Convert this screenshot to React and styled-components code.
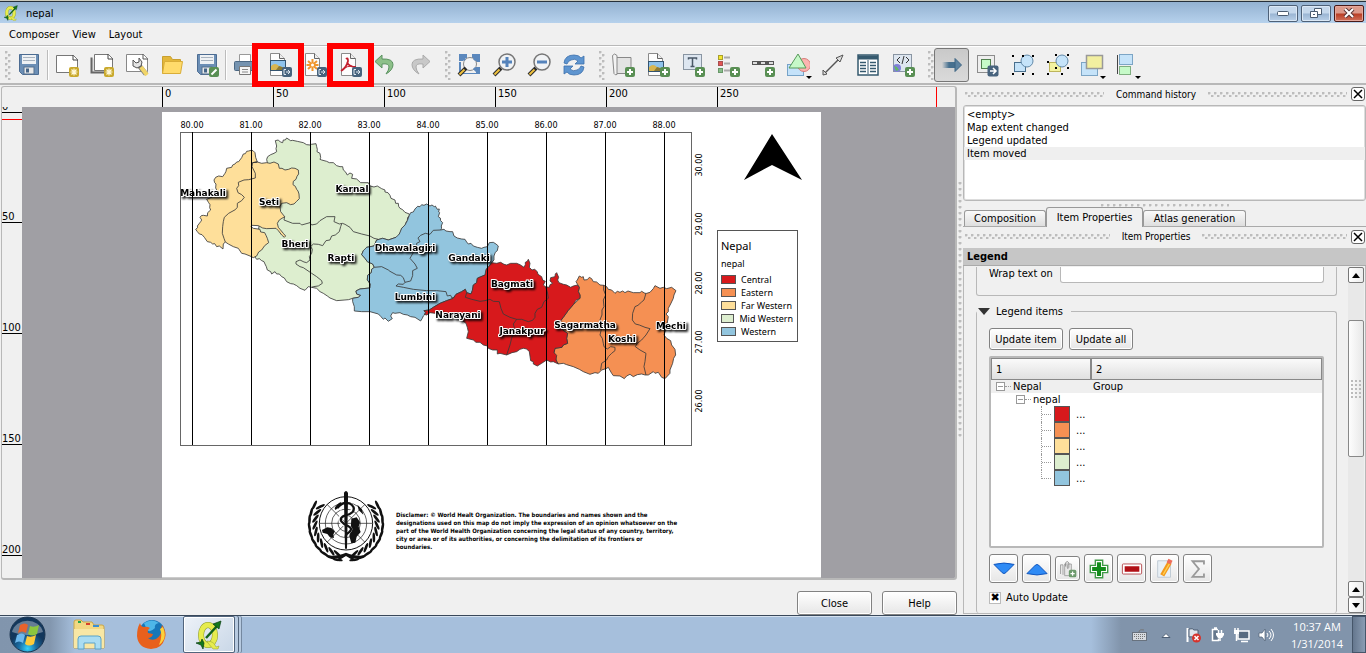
import React from "react";
import styled, { createGlobalStyle, css } from "styled-components";

const ui = `"DejaVu Sans Condensed", "Noto Sans", "DejaVu Sans", sans-serif`;
const C = {
  bg: "#f0f0f0", line: "#b8b8b8", edge: "#828282",
  red: "#d7191c", orange: "#f59053", yellow: "#fedf9a", green: "#ddeecf", blue: "#92c5de",
};

const Global = createGlobalStyle`
  *{box-sizing:border-box}
  body{margin:0;background:${C.bg};font:11px/13px ${ui};color:#000}
  button,input{font:inherit;color:inherit;margin:0}
  button{padding:0}
  svg{display:block;flex:none}
`;

/* ---------- window frame ---------- */
const Window = styled.div`display:flex;flex-direction:column;min-height:100vh;overflow:hidden;`;
const TitleBar = styled.header`
  display:flex;align-items:center;height:23px;padding:2px 2px 0 3px;gap:3px;
  border-top:1px solid #c9c9bd;box-shadow:inset 0 1px #26303a;
  background:linear-gradient(#92b0d0,#b6d1ec);
  h1{flex:1;font:inherit;font-size:11px;margin:0 0 0 4px;}
`;
const CaptionButton = styled.button`
  width:30px;height:17px;border-radius:2px;display:flex;align-items:center;justify-content:center;
  border:1px solid #4e6178;box-shadow:inset 0 0 0 1px #dbe8f5;
  background:linear-gradient(#c5d8ec 48%,#9ab5d3 52%,#b9d0e8);
  ${(p) => p.$close && css`border-color:#471a18;box-shadow:inset 0 0 0 1px #e5a79b;background:linear-gradient(#dc9a8b 48%,#b83c22 52%,#d0705a);`}
`;
const MenuBar = styled.nav`
  display:flex;gap:13px;height:23px;padding:1px 9px 0;align-items:center;border-bottom:1px solid ${C.line};
  button{border:0;background:none;}
`;

/* ---------- toolbar ---------- */
const Toolbar = styled.div`
  display:flex;align-items:center;height:39px;padding-left:5px;border-bottom:2px solid ${C.line};
  border-top:1px solid #fff;
`;
const dots = css`
  background-image:radial-gradient(circle at 1px 1px,#bdbdbd 1px,transparent 2px),radial-gradient(circle at 1px 1px,#bdbdbd 1px,transparent 2px);
  background-size:6px 6px;background-position:0 0,3px 3px;
`;
const Grip = styled.i`width:6px;height:29px;margin-left:${(p) => (p.$first ? 0 : 8)}px;${dots}`;
const Divider = styled.i`width:2px;height:30px;margin-left:1px;background:#bcbcbc;border-right:1px solid #fff;`;
const Tool = styled.button`
  position:relative;width:35px;height:34px;border:1px solid transparent;background:none;border-radius:3px;
  display:flex;align-items:center;justify-content:center;flex:none;
  ${(p) => p.$on && css`border-color:#777;background:linear-gradient(#c9c9c9,#dadada);`}
`;
const Highlight = styled.span`
  position:absolute;z-index:2;top:-6px;bottom:-6px;border:6px solid #f00;
  left:${(p) => (p.$wide ? -11 : -6)}px;right:-8px;
`;
const Drop = styled.i`
  position:absolute;right:2px;bottom:2px;border:3px solid transparent;border-top-color:#000;border-bottom:0;
`;

const Badge = ({ kind }) => (
  <g transform="translate(14 14)">
    <rect width="10" height="10" rx="2" fill={{ add: "#598f54", star: "#c9a92c", out: "#47637d", edit: "#598f54" }[kind]} />
    {kind === "add" && <path d="M5 2v6M2 5h6" stroke="#fff" strokeWidth="2" />}
    {kind === "star" && <path d="M5 1.500v7M1.500 5h7M2.500 2.500l5 5M7.500 2.500l-5 5" stroke="#fff8d8" strokeWidth="1.200" />}
    {kind === "out" && <path d="M4 2.500H2v5h2M4 5h4M6 3l2 2-2 2" stroke="#dfe8f0" fill="none" />}
    {kind === "edit" && <path d="M2.500 7.500l5-5" stroke="#fff" strokeWidth="2" />}
  </g>
);
const Sheet = ({ x = 5, w = 14 }) => (
  <g><path d={`M${x} .500h${w - 5}l5 5V22.500H${x}z`} fill="#fdfdfd" stroke="#8a8a8a" />
    <path d={`M${x + w - 5} .500v5h5`} fill="#eee" stroke="#666" /></g>
);
const Photo = ({ y = 8 }) => (
  <g transform={`translate(2 ${y})`}><rect x=".500" y=".500" width="15" height="10" fill="#8fc3ec" stroke="#33536f" />
    <path d="M1 6q4-4 8 0l6 2v2H1z" fill="#d8b54f" /><path d="M9 6l6 2v2h-9z" fill="#8b7a35" /></g>
);
const Floppy = () => (
  <g><path d="M2.500 1.500h19v20h-16l-3-3z" fill="#6b8eb5" stroke="#4c6c92" />
    <rect x="5" y="2" width="14" height="9" fill="#eef1f4" /><path d="M6 4.500h12M6 7.500h12" stroke="#a8b3bf" />
    <rect x="7" y="14" width="10" height="7" fill="#e8e8e8" stroke="#54708f" /><rect x="9" y="15.500" width="3" height="4" fill="#456588" /></g>
);
const Lens = ({ sign }) => (
  <g><path d="M2 22l7-7" stroke="#2b2b2b" strokeWidth="4" /><path d="M2.500 21.500l5-5" stroke="#f0c23e" strokeWidth="2" />
    <circle cx="15" cy="9" r="8" fill="#f1f3f5" stroke="#767676" strokeWidth="1.500" />
    <path d={sign === "+" ? "M15 4v10M10 9h10" : "M10 9h10"} stroke="#5583bb" strokeWidth="3" /></g>
);
const Undo = ({ c, d }) => <path d="M9 2L2 8.500l7 6.500v-4q7-1 7 3 0 3-3 7 7-4 7-9.500 0-6-11-5.500z" fill={c} stroke={d} />;

const icons = {
  save: <Floppy />,
  fresh: <><path d="M1.500 2.500h17l4 4v13h-21z" fill="#fff" stroke="#777" /><path d="M18 2v5h5" fill="none" stroke="#444" /><Badge kind="star" /></>,
  copy: <><path d="M1.500 4.500v15h18v-2" fill="#ddd" stroke="#666" strokeWidth="2" /><path d="M4.500 1.500h14l4 4v12h-18z" fill="#fff" stroke="#777" /><path d="M18 1v5h5" fill="none" stroke="#444" /><Badge kind="star" /></>,
  wrench: <><path d="M1.500 1.500h17l4 4v13h-21z" fill="#fff" stroke="#888" /><path d="M18 1v5h5" fill="none" stroke="#555" /><path d="M12 10l9 11" stroke="#777" strokeWidth="5" /><path d="M16 14l6 8" stroke="#f1d568" strokeWidth="4" /><path d="M8 7l3 3 3-1 0-4 3 4-1 4-4 2-4-2z" fill="#e4e4e4" stroke="#555" /></>,
  folder: <><path d="M2.500 20.500v-17h8l2 3h8v4" fill="#e3b73a" stroke="#c9a030" /><path d="M2.500 20.500l2-12h18l-2 12z" fill="#ffdb6b" stroke="#d9ad38" /></>,
  saveAs: <><Floppy /><Badge kind="edit" /></>,
  print: <><path d="M6.500 1.500h11v7h-11z" fill="#fff" stroke="#999" /><rect x="1.500" y="8.500" width="21" height="9" rx="1" fill="#7593b0" stroke="#4c6884" /><path d="M6.500 13.500h11v8h-11z" fill="#f5f5f5" stroke="#777" /><path d="M9 16.500h6M9 19h6" stroke="#888" /></>,
  image: <><Sheet x={2.5} w={14} /><Photo y={7} /><Badge kind="out" /></>,
  svg: <><Sheet x={2.5} /><path d="M9.500 6v12M3.500 12h12M5 8l9 8M14 8l-9 8" stroke="#f0962e" strokeWidth="2" /><circle cx="9.500" cy="12" r="1.500" fill="#fff" /><Badge kind="out" /></>,
  pdf: <><Sheet x={3.5} /><path d="M8 6q2-2 2 2-1 6-7 10M9 9q2 5 9 5" fill="none" stroke="#c3202f" strokeWidth="1.800" /><path d="M5 16q4-3 9-3" fill="none" stroke="#c3202f" /><Badge kind="out" /></>,
  undo: <Undo c="#8dc089" d="#5b9260" />,
  redo: <g transform="matrix(-1 0 0 1 24 0)"><Undo c="#c8c8c8" d="#aaa" /></g>,
  full: <><rect x="2" y="1" width="21" height="20" fill="#5b88bd" /><path d="M10 1h5v4h3l1 4h4v5h-4v6H4V9H2V8h4l1-3h3z" fill="#f0f0f0" /><circle cx="13" cy="11" r="6.500" fill="#f4f5f6" stroke="#888" /><path d="M5 4l3 3M20 4l-3 3M20 18l-3-3" stroke="#5b88bd" strokeWidth="3" /><path d="M2 22l7-7" stroke="#2b2b2b" strokeWidth="4" /><path d="M2.500 21.500l5-5" stroke="#f0c23e" strokeWidth="2" /></>,
  zin: <Lens sign="+" />, zout: <Lens sign="-" />,
  refresh: <g fill="#5e95d0" stroke="#3d70ab" strokeWidth=".800"><path d="M2 10q1-8 10-8 5 0 7 3l3-2v8h-9l3-3q-3-3-7-1-3 1-4 4z" /><path d="M22 14q-1 8-10 8-5 0-7-3l-3 2v-8h9l-3 3q3 3 7 1 3-1 4-4z" /></g>,
  map: <><path d="M4 4.500h16v16H5" fill="#e3e3e3" stroke="#888" /><path d="M1.500 2.500q2-3 4.500 0v19q-2 1-3-1z" fill="#f3f3f3" stroke="#888" /><Badge kind="add" /></>,
  picture: <><Sheet x={2.5} /><Photo y={8} /><Badge kind="add" /></>,
  text: <><rect x="2.500" y="1.500" width="18" height="15" fill="#dde6f0" stroke="#8995a2" /><path d="M7.500 6.500V5h8v1.500M11.500 5v8M9.500 13.500h4" stroke="#4a5867" fill="none" strokeWidth="1.500" /><Badge kind="add" /></>,
  legend: <><rect x="2.500" y="2.500" width="4" height="4" fill="#f3e72c" stroke="#a89e2c" /><rect x="2.500" y="8.500" width="4" height="4" fill="#e35454" stroke="#a85050" /><rect x="2.500" y="15.500" width="4" height="4" fill="#89bc8b" stroke="#689868" /><path d="M8 4.500h6M8 10.500h6M8 17.500h6" stroke="#aaa" strokeWidth="2" /><Badge kind="add" /></>,
  scale: <><rect x="1.500" y="8.500" width="21" height="3" fill="#ddd" stroke="#555" /><path d="M6 10h4M14 10h4" stroke="#555" strokeWidth="2" /><Badge kind="add" /></>,
  shape: <><rect x="1.500" y="11.500" width="16" height="11" fill="#c4e2fa" stroke="#76a3c8" /><circle cx="18" cy="12" r="6.500" fill="#fbb4b0" stroke="#d77c79" /><path d="M12 1l8 14H3z" fill="#c6f8c8" stroke="#579a59" /></>,
  arrow: <><path d="M3 21L18 6" stroke="#555" strokeWidth="1.500" /><path d="M22 2l-3 7-4-4zM2 22v-5l4 4z" fill="#ddd" stroke="#555" /></>,
  table: <><rect x="2" y="2" width="20" height="20" fill="#fff" stroke="#35596e" strokeWidth="1.500" /><path d="M2 4.500h20" stroke="#35596e" strokeWidth="4" /><path d="M12 7v14" stroke="#35596e" /><path d="M4 9.500h6M4 12.500h6M4 15.500h6M4 18.500h6M14 9.500h6M14 12.500h6M14 15.500h6M14 18.500h6" stroke="#35596e" strokeWidth="1.500" /></>,
  html: <><rect x="2.500" y="1.500" width="18" height="17" fill="#dde6f0" stroke="#8995a2" /><path d="M9 4L6 7l3 3M15 4l3 3-3 3M13 3l-2 8" stroke="#333" fill="none" /><circle cx="6" cy="15" r="4" fill="#8080d8" /><path d="M3 13l3 1 2 3-3 1z" fill="#61b865" /><Badge kind="add" /></>,
  move: <><defs><linearGradient id="mv"><stop offset="0" stopColor="#47708f" stopOpacity="0" /><stop offset=".500" stopColor="#47708f" /></linearGradient></defs><path d="M2 9h14v6H2z" fill="url(#mv)" /><path d="M15 5.500l6.500 6.500-6.500 6.500z" fill="#5d83a1" stroke="#3d6482" /></>,
  inside: <><rect x="2.500" y="2.500" width="17" height="17" fill="#eee" stroke="#8c8c8c" /><rect x="6.500" y="6.500" width="9" height="9" fill="#c6fac8" stroke="#51804f" /><rect x="12.500" y="12.500" width="11" height="11" rx="2" fill="#47637d" /><path d="M15 18h6M18 15l3 3-3 3" stroke="#fff" strokeWidth="1.500" fill="none" /></>,
  group: <><rect x="4.500" y="9.500" width="11" height="9" fill="#c5e3f9" stroke="#496f8d" /><circle cx="17" cy="8" r="6" fill="#c5e3f9" stroke="#6289a8" /><path fill="#000" d="M2 2h2v2H2zM12 2h2v2h-2zM22 2h2v2h-2zM2 20h2v2H2zM22 20h2v2h-2zM12 20h2v2h-2z" /></>,
  ungroup: <><rect x="4.500" y="9.500" width="11" height="9" fill="#f4f3a0" stroke="#bdb55c" /><circle cx="17" cy="8" r="6" fill="#c5e3f9" stroke="#6289a8" /><path fill="#000" d="M2 8h2v2H2zM10 1h2v2h-2zM22 1h2v2h-2zM2 20h2v2H2zM22 14h2v2h-2zM16 20h2v2h-2zM10 14h2v2h-2z" /></>,
  raise: <><rect x="1.500" y="9.500" width="16" height="13" fill="#c5e3f9" stroke="#7ca5c5" /><rect x="6.500" y="2.500" width="16" height="13" fill="#f2efa0" stroke="#999" strokeWidth="1.500" /></>,
  align: <><path d="M2.500 2v19" stroke="#444" /><rect x="4.500" y="1.500" width="13" height="10" fill="#c5e3f9" stroke="#7ca5c5" /><rect x="4.500" y="13.500" width="11" height="8" fill="#c6fac8" stroke="#7fae80" /></>,
};
const Icon = ({ name, size = 24 }) => <svg width={size} height={size} viewBox="0 0 24 24" fill="none" aria-hidden="true">{icons[name]}</svg>;

const toolGroups = [
  ["grip1", ["save", "Save project"]],
  ["sep", ["fresh", "New composer"], ["copy", "Duplicate composer"], ["wrench", "Composer manager"], ["folder", "Load template"], ["saveAs", "Save as template"]],
  ["sep", ["print", "Print"], ["image", "Export as image", "wide"], ["svg", "Export as SVG"], ["pdf", "Export as PDF", "narrow"], ["undo", "Undo"], ["redo", "Redo"]],
  ["grip", ["full", "Zoom full"], ["zin", "Zoom in"], ["zout", "Zoom out"], ["refresh", "Refresh view"]],
  ["grip", ["map", "Add map"], ["picture", "Add image"], ["text", "Add label"], ["legend", "Add legend"], ["scale", "Add scalebar"], ["shape", "Add shape", "drop"], ["arrow", "Add arrow"], ["table", "Add table"], ["html", "Add HTML frame"]],
  ["grip", ["move", "Select item", "on"], ["inside", "Move item content"], ["group", "Group items"], ["ungroup", "Ungroup items"], ["raise", "Raise items", "drop"], ["align", "Align items", "drop"]],
];

/* ---------- composer view ---------- */
const Main = styled.main`display:flex;flex:1;min-height:0;`;
const Work = styled.section`flex:1;min-width:0;display:flex;flex-direction:column;padding:1px 0 0 1px;`;
const View = styled.div`
  flex:1;min-height:0;display:grid;grid-template:20px 1fr / 20px 1fr;
  border:2px solid ${C.line};border-left-width:1px;border-top-width:1px;border-radius:3px;overflow:hidden;
`;
const RulerX = styled.div`
  grid-column:2;display:flex;padding-left:140px;overflow:hidden;font-size:11px;
  span{width:111px;flex:none;border-left:1px solid #000;padding-left:2px;line-height:13px;}
`;
const CursorX = styled.i`flex:none;width:1px;background:#f00;margin-left:108px;`;
const RulerY = styled.div`
  display:flex;flex-direction:column;overflow:hidden;font-size:11px;
  span{height:111px;flex:none;border-bottom:1px solid #000;display:flex;align-items:flex-end;line-height:11px;}
  span:first-child{height:6px;}
`;
const CursorY = styled.i`flex:none;height:1px;margin:6px 0 -8px;background:#f00;`;
const Canvas = styled.div`background:#a09fa4;padding:5px 0 0 140px;overflow:hidden;min-height:466px;`;
const Paper = styled.div`position:relative;width:659px;height:466px;background:#fff;border-bottom:1px solid #ccc;`;
const MapArt = styled.svg`position:absolute;left:0;top:0;`;
const Legend = styled.section`
  position:absolute;left:555px;top:118px;width:81px;height:112px;border:1px solid #555;padding:8px 4px 0 3px;background:#fff;
  h2{font:11px/14px "Noto Sans",sans-serif;margin:0 0 5px;}
  h3{font:9px/12px "Noto Sans",sans-serif;margin:0 0 3px;}
  ul{list-style:none;margin:0;padding:0;}
  li{display:flex;align-items:center;gap:5px;font:9px/13px "Noto Sans",sans-serif;height:13px;white-space:nowrap;}
`;
const Swatch = styled.i`width:15px;height:9px;border:1px solid #555;background:${(p) => p.$c};`;
const Disclaimer = styled.p`
  position:absolute;left:234px;top:399px;margin:0;font:bold 6px/8px "DejaVu Sans Condensed","DejaVu Sans",sans-serif;white-space:nowrap;
`;
const DialogRow = styled.footer`display:flex;justify-content:flex-end;gap:10px;padding:11px 0 0;height:35px;`;
const Push = styled.button`
  height:${(p) => (p.$h || 24)}px;width:${(p) => p.$w}px;border:1px solid ${C.edge};border-radius:3px;
  background:linear-gradient(#fff,#e6e6e6);box-shadow:inset 0 0 0 1px #fff;
  display:flex;align-items:center;justify-content:center;flex:none;
`;

const outline = { stroke: "#3a3a3a", strokeWidth: 2.5, strokeLinejoin: "round" };
const west = "248,158 262,156 257,142 255,128 249,122 243,121 236,123 230,124 226,131 220,132 215,143 206,155 200,156 195,162 188,165 185,172 170,175 168,184 165,190 158,200 146,198 137,202 132,210 134,218 138,222 137,234 140,240 125,262 110,268 116,278 120,284 119,293 122,300 113,308 112,318 100,316 94,317 90,322 95,330 92,335 82,348 83,353 77,358 82,365 88,372 96,374 103,382 112,395 122,397 128,402 134,401 140,410 148,408 159,417 160,402 166,396 175,402 190,410 205,415 215,430 225,432 240,438 250,443 260,438 266,426 275,420 284,407 296,398 292,385 288,376 284,368 272,366 270,358 250,355 243,350 245,346 265,347 278,354 290,356 318,355 325,362 335,375 343,382 347,378 340,370 330,358 325,352 322,340 328,330 344,320 332,305 330,290 335,280 350,278 362,284 372,282 379,275 388,266 387,252 384,243 380,238 376,229 369,224 370,214 378,208 381,199 386,192 385,180 375,175 365,174 356,178 345,180 336,175 328,175 325,162 312,156 300,160 290,158 275,160 262,156";
const mid = "292,158 290,148 293,140 302,134 312,130 320,125 318,116 320,108 316,92 325,90 331,96 338,98 340,90 346,90 350,84 362,92 368,91 382,94 400,98 410,104 420,105 424,103 438,101 440,110 442,118 441,125 450,130 452,143 450,148 455,150 470,154 478,158 490,158 500,167 510,170 518,170 520,180 526,185 532,195 540,189 548,193 545,205 560,207 572,218 595,218 600,228 612,231 622,228 635,236 645,240 645,246 654,248 660,256 663,265 675,270 677,280 685,280 686,289 690,295 698,299 705,307 718,312 718,318 713,322 712,332 708,338 707,345 695,355 693,365 688,372 685,380 678,382 655,390 638,385 620,390 612,408 590,412 590,421 580,422 575,434 585,445 592,455 608,462 613,472 605,478 604,488 593,496 592,510 601,522 600,534 570,537 558,543 560,552 572,556 565,562 548,565 536,569 525,570 500,572 480,564 472,558 460,550 450,545 440,535 425,532 415,530 405,541 390,535 380,527 370,522 362,521 350,515 343,504 335,500 328,492 320,492 315,485 305,492 302,485 292,480 289,470 285,462 282,455 275,452 268,446 260,448 255,441";
const dhw = "718,316 722,308 730,306 735,297 743,289 750,290 755,284 762,286 770,282 780,288 786,285 793,290 796,288 802,298 808,297 806,306 809,308 805,320 811,324 812,332 818,338 814,348 815,355 812,360 822,358 828,363 840,365 848,365 852,378 862,384 875,387 885,388 890,396 895,402 903,400 910,408 922,412 935,415 942,412 952,410 956,402 958,398 970,397 978,402 985,408 982,422 976,427 972,438 972,450 965,458 955,472 950,478 948,495 932,500 922,505 920,518 910,525 907,542 903,552 890,548 886,538 875,545 858,553 850,565 830,572 810,580 790,592 778,600 762,602 768,610 760,618 757,625 752,633 735,622 722,620 712,615 700,613 690,608 675,610 668,608 662,618 667,626 655,634 645,624 640,628 633,620 625,612 600,605 575,605 553,603 553,590 548,575 548,565 565,562 572,556 560,552 558,543 570,537 600,534 601,522 592,510 593,496 604,488 605,478 613,472 608,462 592,455 585,445 575,434 580,422 590,412 612,408 620,390 638,385 655,390 678,382 688,372 695,355 705,345 712,332";
const central = "275,248 290,250 302,247 312,253 320,255 332,250 350,250 360,254 372,262 376,254 376,247 382,244 385,238 390,250 388,262 396,270 404,268 412,275 414,283 425,290 428,300 436,304 430,315 436,320 448,322 450,314 458,310 450,303 452,293 465,290 466,282 470,278 476,292 473,300 477,308 490,313 500,315 512,322 520,318 532,315 538,322 535,335 540,345 540,355 528,361 520,374 505,391 490,412 480,425 478,440 495,455 503,460 500,475 503,490 490,495 486,502 465,505 462,518 470,526 468,540 475,552 460,545 452,546 440,540 425,550 412,558 400,552 400,545 392,542 388,515 380,507 370,505 360,508 350,515 336,518 320,525 300,520 292,522 292,510 278,510 265,505 262,498 250,495 240,487 228,487 220,480 200,475 205,455 202,442 198,430 185,420 150,405 105,400 90,398 80,405 72,403 78,398 72,392 88,390 100,382 120,370 140,362 160,355 168,343 185,335 196,328 200,338 213,342 217,332 220,315 230,308 232,295 255,285 258,268 265,262";
const eastern = "538,322 528,305 532,300 538,288 545,292 550,290 552,300 562,299 568,292 575,296 580,305 590,306 600,315 611,316 620,320 625,328 635,330 645,340 652,334 660,337 668,333 675,338 684,333 700,338 720,338 725,334 735,340 740,340 750,337 760,326 765,317 780,325 790,322 800,326 815,322 828,332 822,345 820,355 812,372 805,385 805,395 798,402 805,410 800,440 792,465 800,475 812,482 815,495 825,508 827,525 821,535 818,550 810,570 810,580 795,596 785,592 775,577 765,580 760,575 745,585 735,585 725,582 712,584 700,590 690,583 680,588 673,596 660,588 640,587 635,580 625,562 618,566 605,570 595,580 585,578 570,583 550,575 538,568 520,560 500,554 490,550 475,552 470,545 462,520 465,505 486,502 490,495 503,490 500,475 503,460 495,455 478,440 480,425 490,412 505,391 520,374 540,355 540,345 535,335";
const placeNames = [["Mahakali", 203, 196], ["Seti", 269, 205], ["Karnal", 352, 192], ["Bheri", 295, 247], ["Rapti", 341, 261], ["Dhawalagiri", 405, 251], ["Gandaki", 469, 261], ["Lumbini", 415, 300], ["Bagmati", 512, 287], ["Narayani", 458, 318], ["Janakpur", 522, 334], ["Sagarmatha", 585, 328], ["Koshi", 622, 342], ["Mechi", 671, 329]];
const meridians = [80, 81, 82, 83, 84, 85, 86, 87, 88];
const parallels = [30, 29, 28, 27, 26];

const leafAngles = [16, 28, 40, 52, 64, 76, 88, 100, 112, 124];
const Wreath = () => leafAngles.map((a) => (
  <g key={a} transform={`rotate(${a} 168 130)`}>
    <ellipse cx="168" cy="223" rx="15" ry="4" transform="rotate(28 168 223)" />
    <ellipse cx="174" cy="240" rx="15" ry="4" transform="rotate(-8 174 240)" />
  </g>
));
const Emblem = () => (
  <g transform="translate(290 480) scale(.3333)" fill="#111">
    <g transform="translate(0 2)"><Wreath /></g>
    <g transform="translate(336 2) scale(-1 1)"><Wreath /></g>
    <path d="M108 226q34 4 60-8 26 12 60 8-12 14-38 8l8 8-4 2-26-16-26 16-4-2 8-8q-26 6-38-8z" />
    <circle cx="168" cy="130" r="80" fill="#fff" stroke="#111" strokeWidth="3" />
    <g fill="none" stroke="#111" strokeWidth="2"><circle cx="168" cy="130" r="62" /><circle cx="168" cy="130" r="43" /><circle cx="168" cy="130" r="24" />
      <path d="M88 130h160M111 73l114 114M225 73L111 187" /></g>
    <path d="M134 84q8-14 20-18l-4 14-14 10zM202 74l14 14 4 16-14-14zM184 116l16-4 10 14-4 14 6 16-12 14-4 18-12 2-6-22 4-20zM96 150l16-8 12 2 10 10-4 10 2 10-12-2-8-10-14-4z" />
    <path d="M148 88q12-20 30-16 18 8 8 22-8 8-20 10-20 6-14 20 6 8 20 14 16 8 4 18-10 6-12 14" fill="none" stroke="#fff" strokeWidth="12" />
    <path d="M142 84q16-20 36-14 20 10 10 26-8 8-22 10-18 6-12 18 6 8 20 14 16 8 4 18-10 6-12 14" fill="none" stroke="#111" strokeWidth="7" />
    <path d="M162 38q6-10 12 0v24l-3 144h-6l-3-144z" />
  </g>
);

const MapPicture = () => (
  <MapArt width="659" height="465" viewBox="162 112 659 465" role="img" aria-label="Map of Nepal">
    <defs><filter id="shade" x="-20%" y="-50%" width="150%" height="250%"><feDropShadow dx="2" dy="2" stdDeviation="1.300" floodColor="#000" floodOpacity=".85" /></filter></defs>
    <g transform="translate(170 110) scale(.3333)" {...outline}>
      <polygon points={mid} fill={C.green} />
      <polygon points={west} fill={C.yellow} />
      <polygon points={dhw} fill={C.blue} />
      <g fill="none">
        <path d="M262 156L248 158 246 170 256 190 256 204 236 209 222 210 205 217 206 227 200 235 204 248 215 254 223 262 215 272 202 280 202 292 196 299 176 310 163 322 160 335 158 350 157 370 162 385 166 396" />
        <path d="M344 320L342 330 368 340 390 340 395 345 420 338 425 345 440 342 450 332 470 320 495 320 492 335 508 342 517 340 525 343 540 352 550 365 575 372 600 378 612 385 625 388" />
        <path d="M515 342L512 350 508 365 496 375 485 378 480 390 468 392 458 407 445 403 430 402 422 410 427 418 425 430 418 440 420 450 410 458 402 456 390 450 378 455 378 462 390 470 400 473 425 490 440 500 455 512 457 520 445 528 430 530 425 532" />
        <path d="M812 360L790 361 780 373 766 370 752 376 744 384 750 395 740 400 740 410 725 415 730 428 720 445 735 462 742 475 728 482 728 497 722 513 705 517" />
        <path d="M613 472L635 470 655 480 660 484 680 495 692 496 700 503 705 517 700 523 685 522 678 528 700 532 730 538 770 542 800 542 828 545 832 558 842 556 846 564 856 560" />
      </g>
    </g>
    <g transform="translate(400 180) scale(.3333)" {...outline}>
      <polygon points={eastern} fill={C.orange} /><polygon points={central} fill={C.red} />
      <g fill="none">
        <path d="M200 338L196 352 215 358 240 364 255 362 270 358 280 364 298 365 303 385 310 402 330 412 350 418 365 418 385 425 398 421 405 412 405 400 412 388 425 382 432 365 445 355 442 335 436 320M350 418L340 432 345 450 335 475 330 495 320 525" />
        <path d="M611 315L611 330 617 345 610 360 612 380 606 390 606 405 600 420 605 445 600 465 607 475 610 490 612 500 622 507 632 500 645 502 645 512 635 520 625 530 620 540 605 550 602 570" />
        <path d="M738 340L732 360 725 366 714 376 705 380 698 400 697 420 706 432 718 435 735 442 750 446 738 465 725 480 712 490 706 500 720 510 738 520 735 545 732 560 738 585" />
      </g>
    </g>
    <g fontFamily="DejaVu Sans, sans-serif" fontSize="9" fontWeight="bold" textAnchor="middle" filter="url(#shade)" stroke="#fff" strokeWidth="2" paintOrder="stroke" strokeLinejoin="round">
      {placeNames.map(([n, x, y]) => <text key={n} x={x} y={y}>{n}</text>)}
    </g>
    <rect x="180" y="132" width="511" height="313" fill="none" stroke="#666" shapeRendering="crispEdges" />
    <g fontFamily="DejaVu Sans Condensed, sans-serif" fontSize="9" textAnchor="middle">
      {meridians.map((m, i) => (
        <g key={m}><path d={`M${192 + i * 59} 132V445`} stroke="#000" shapeRendering="crispEdges" /><text x={192 + i * 59} y="128">{m}.00</text></g>
      ))}
      {parallels.map((p, i) => <text key={p} transform={`translate(702 ${165 + i * 59}) rotate(-90)`}>{p}.00</text>)}
    </g>
    <path d="M772 134L802 180 772 165 744 180z" />
    <Emblem />
  </MapArt>
);

/* ---------- dock ---------- */
const Split = styled.i`width:6px;align-self:stretch;margin:97px 0 177px;background:radial-gradient(circle at 3px 1px,#bdbdbd 1px,transparent 2px) 0 0/6px 6px;`;
const Dock = styled.aside`width:403px;flex:none;display:flex;flex-direction:column;min-height:0;`;
const DockTitle = styled.div`
  display:flex;align-items:center;gap:12px;height:${(p) => p.$h}px;padding:0 1px 2px 2px;
  h2{font:inherit;font-size:10px;margin:0;white-space:nowrap;}
  i{flex:1;height:5px;${dots}}
  button{width:14px;height:14px;margin-left:-8px;border:1px solid #666;border-radius:3px;background:#fff;display:flex;align-items:center;justify-content:center;}
`;
const History = styled.ul`
  list-style:none;margin:0;height:96px;padding:2px 0;border:1px solid ${C.line};box-shadow:inset 0 0 0 1px #ddd;border-radius:3px;background:#fff;
  li{height:13px;padding-left:3px;white-space:nowrap;}
  li:last-child{background:#efefef;}
`;
const Sash = styled.i`height:3px;width:128px;margin:3px auto 0;background:radial-gradient(circle at 1px 1px,#bdbdbd 1px,transparent 2px) 0 0/6px 6px;`;
const Tabs = styled.div`display:flex;align-items:flex-end;height:20px;padding-left:1px;border-bottom:1px solid #aaa;`;
const Tab = styled.button`
  height:16px;width:${(p) => p.$w}px;border:1px solid #999;border-bottom:0;border-radius:3px 3px 0 0;background:linear-gradient(#fafafa,#dedede);
  ${(p) => p.$on && css`height:20px;margin-bottom:-1px;background:${C.bg};padding-bottom:1px;`}
`;
const Heading = styled.h3`margin:0;height:18px;padding-left:4px;background:#c6c6c6;border-bottom:1px solid #aaa;font:bold 11px/18px ${ui};`;
const ScrollArea = styled.div`
  flex:1;min-height:0;display:flex;border:1px solid ${C.line};border-top:0;padding:1px 1px 0 12px;margin-bottom:1px;
`;
const Props = styled.div`flex:1;min-width:0;margin-right:11px;display:flex;flex-direction:column;overflow:hidden;`;
const WrapBox = styled.div`
  height:29px;border:1px solid ${C.line};border-top:0;border-radius:0 0 3px 3px;padding:0 12px 0 12px;
  display:flex;gap:7px;
  input{flex:1;min-width:0;height:16px;border:1px solid ${C.line};border-top:0;border-radius:0 0 3px 3px;background:#fff;}
`;
const ItemsBox = styled.fieldset`
  flex:1;margin:9px 0 0;min-width:0;border:1px solid ${C.line};border-bottom:0;border-radius:3px;padding:10px 12px 0;
  legend{padding:0 8px 0 1px;margin-left:-12px;display:flex;align-items:center;gap:6px;}
`;
const Row = styled.div`display:flex;align-items:center;gap:${(p) => p.$gap || 6}px;`;
const TreeFrame = styled.div`margin:6px 0;height:192px;background:#fff;border:2px solid ${C.line};border-radius:2px;`;
const Tree = styled.table`
  width:100%;border-collapse:separate;border-spacing:0;table-layout:fixed;
  th{height:22px;padding:0 4px;text-align:left;font-weight:normal;border:1px solid #888;background:linear-gradient(#fafafa,#e0e0e0);}
  th:first-child{width:100px;}
  td{padding:0 2px;height:13px;}
  tbody tr:first-child td{background:#efefef;}
`;
const Node = styled.div`display:flex;align-items:center;height:${(p) => p.$h || 13}px;padding-left:${(p) => p.$x}px;`;
const Expander = styled.button`
  width:9px;height:9px;border:1px solid #999;background:linear-gradient(#999,#999) center/5px 1px no-repeat #fff;
`;
const Stub = styled.i`width:6px;margin-right:2px;border-top:1px dotted #999;`;
const Branch = styled.i`width:11px;height:${(p) => (p.$last ? 9 : 16)}px;align-self:flex-start;border-left:1px dotted #999;background:linear-gradient(90deg,#999 50%,transparent 50%) 0 8px/2px 1px repeat-x;margin-right:2px;`;
const Chip = styled.i`width:16px;height:16px;border:1px solid #555;background:${(p) => p.$c};margin-right:6px;`;
const Auto = styled.label`
  display:flex;align-items:center;gap:5px;margin-top:8px;
  input{appearance:none;width:12px;height:12px;background:#fff;border:1px solid #bbb;display:grid;place-items:center;overflow:hidden;}
  input:checked::before{content:"✖";font:11px/10px "DejaVu Sans",sans-serif;}
`;
const ScrollBar = styled.div`
  width:16px;display:flex;flex-direction:column;background:#e8e8e8;
  button{height:16px;flex:none;border:1px solid #777;border-radius:2px;background:linear-gradient(90deg,#fff,#ececec);display:flex;align-items:center;justify-content:center;}
`;
const Thumb = styled.div`
  height:137px;margin:37px 0 auto;border:1px solid #888;border-radius:2px;background:linear-gradient(90deg,#fdfdfd,#e8e8e8);
  display:flex;align-items:center;justify-content:center;
  i{width:11px;height:18px;background:radial-gradient(circle at 1px 1px,#bbb 1px,transparent 1px) 0 0/4px 4px;}
`;
const Tri = ({ down }) => <svg width="8" height="5"><path d={down ? "M0 0h8L4 5z" : "M0 5h8L4 0z"} /></svg>;
const Cross = () => <svg width="10" height="10"><path d="M1 1l8 8M9 1l-8 8" stroke="#000" strokeWidth="1.500" /></svg>;

const itemTools = [
  ["Move item down", <path d="M1 7q11-3 22 0l-9 9q-2 2-4 0z" fill="#2f8bf5" stroke="#0b4fb8" />],
  ["Move item up", <path d="M1 17q11 3 22 0l-9-9q-2-2-4 0z" fill="#2f8bf5" stroke="#0b4fb8" />],
  ["Add group", <g><path d="M3 18V7h3v12M8 6v14h8V6z" fill="#e8e8e8" stroke="#999" /><path d="M9 9V5q2-4 4 0v5q-2 4-2-3" stroke="#888" /><rect x="13" y="13" width="9" height="9" rx="2" fill="#6d9a6d" /><path d="M17.500 15v5M15 17.500h5" stroke="#fff" strokeWidth="1.500" /></g>, 1],
  ["Add layer", <g><path d="M8 2.500h8v5.500h5.500v8H16v5.500H8V16H2.500V8H8z" fill="#fff" stroke="#3f9a47" strokeWidth="1.500" /><path d="M12 4.500v15M4.500 12h15" stroke="#128c1b" strokeWidth="4.500" /></g>],
  ["Remove item", <g><rect x="1.500" y="6.500" width="21" height="11" rx="1" fill="#fff" stroke="#b5474c" /><rect x="4" y="9" width="16" height="6" fill="#b10f15" /></g>],
  ["Edit item", <g><path d="M4 3h14v18H4z" fill="#e9f0f6" stroke="#bcc8d2" /><path d="M9 19l8-14" stroke="#f39a1c" strokeWidth="5" /><path d="M10 18l7-12" stroke="#ffd255" strokeWidth="1.500" /><path d="M16 6l2-4" stroke="#ee6e5c" strokeWidth="5" /></g>],
  ["Count features", <path d="M18.500 7V3.500H6l7 8.500-7 8.500h12.500V17" stroke="#999" strokeWidth="2" />],
];
const classes = [["Central", C.red], ["Eastern", C.orange], ["Far Western", C.yellow], ["Mid Western", C.green], ["Western", C.blue]];

/* ---------- taskbar ---------- */
const Taskbar = styled.footer`
  display:flex;align-items:stretch;height:38px;border-top:1px solid #39485a;box-shadow:inset 0 1px #d5e2f0;
  background:linear-gradient(90deg,#8195ad,#8296ae 50px,#a6bfdc 75px,#a6bfdc calc(100% - 275px),#8194ab calc(100% - 245px),#8194ab);
`;
const TaskButton = styled.button`
  width:${(p) => p.$w}px;border:0;background:none;display:flex;align-items:center;justify-content:center;
  ${(p) => p.$on && css`margin-left:5px;border:1px solid #52657d;border-radius:2px;box-shadow:inset 0 0 0 1px #fff,3px 0 #b7cae0,4px 0 #52657d,6px 0 #b7cae0,7px 0 #7488a0;background:linear-gradient(135deg,#edf2f8,#c9d7e7);`}
`;
const Tray = styled.div`margin-left:auto;display:flex;align-items:center;gap:8px;color:#fff;`;
const Clock = styled.time`font:11px/17px "Open Sans",sans-serif;text-align:center;width:70px;padding-top:1px;`;
const Peek = styled.button`width:14px;margin-left:-8px;align-self:stretch;border:1px solid #46566a;background:linear-gradient(90deg,#65778e,#8a9cb3);`;

const QLogo = ({ size }) => (
  <svg width={size} height={size} viewBox="0 0 30 30"><ellipse cx="14" cy="15" rx="7" ry="10" fill="none" stroke="#8c9a2c" strokeWidth="6" /><ellipse cx="14" cy="15" rx="7" ry="10" fill="none" stroke="#e6ec4e" strokeWidth="5" /><path d="M13 21q7 0 9 6l3-1-1 3h-5l-5-6z" fill="#e6ec4e" stroke="#8c9a2c" strokeWidth=".500" /><path d="M12 18L23 6" stroke="#12631b" strokeWidth="2.500" /><path d="M19 4l8-3-2 8zM2 23l5-1 1-3 2 4-1 6-2-4z" fill="#12781b" stroke="#093d10" strokeWidth=".700" /></svg>
);

export default function App() {
  return (
    <Window>
      <Global />
      <TitleBar>
        <QLogo size={16} /><h1>nepal</h1>
        <CaptionButton aria-label="Minimize"><svg width="12" height="5"><rect x=".500" y=".500" width="11" height="4" rx="1" fill="#fff" stroke="#4b5c70" /></svg></CaptionButton>
        <CaptionButton aria-label="Restore"><svg width="12" height="11" fill="#fff" stroke="#4b5c70"><path d="M4.500.500h7v6h-7z" /><path d="M.500 3.500h7v6h-7zM3 6.500h2" /></svg></CaptionButton>
        <CaptionButton $close aria-label="Close window"><svg width="12" height="10"><path d="M2 1l8 8M10 1L2 9" stroke="#5a3535" strokeWidth="4" /><path d="M2 1l8 8M10 1L2 9" stroke="#fff" strokeWidth="2" /></svg></CaptionButton>
      </TitleBar>
      <MenuBar><button>Composer</button><button>View</button><button>Layout</button></MenuBar>
      <Toolbar role="toolbar">
        {toolGroups.map(([lead, ...tools], i) => (
          <React.Fragment key={i}>
            {lead === "sep" ? <Divider /> : <Grip $first={lead === "grip1"} />}
            {tools.map(([name, label, mark]) => (
              <Tool key={name} aria-label={label} $on={mark === "on"}>
                <Icon name={name} />
                {mark === "drop" && <Drop />}
                {(mark === "wide" || mark === "narrow") && <Highlight $wide={mark === "wide"} />}
              </Tool>
            ))}
          </React.Fragment>
        ))}
      </Toolbar>
      <Main>
        <Work>
          <View>
            <RulerX>{[0, 50, 100, 150, 200].map((n) => <span key={n}>{n}</span>)}<span>250</span><CursorX /></RulerX>
            <RulerY><span>0</span><CursorY />{[50, 100, 150, 200].map((n) => <span key={n}>{n}</span>)}</RulerY>
            <Canvas>
              <Paper>
                <MapPicture />
                <Legend>
                  <h2>Nepal</h2><h3>nepal</h3>
                  <ul>{classes.map(([n, c]) => <li key={n}><Swatch $c={c} />{n}</li>)}</ul>
                </Legend>
                <Disclaimer>
                  Disclamer: © World Healt Organization. The boundaries and names shown and the<br />
                  designations used on this map do not imply the expression of an opinion whatsoever on the<br />
                  part of the World Health Organization concerning the legal status of any country, territory,<br />
                  city or area or of its authorities, or concerning the delimitation of its frontiers or<br />
                  boundaries.
                </Disclaimer>
              </Paper>
            </Canvas>
          </View>
          <DialogRow><Push $w={75}>Close</Push><Push $w={75}>Help</Push></DialogRow>
        </Work>
        <Split />
        <Dock>
          <DockTitle $h={20}><i /><h2>Command history</h2><i /><button aria-label="Close command history"><Cross /></button></DockTitle>
          <History><li>&lt;empty&gt;</li><li>Map extent changed</li><li>Legend updated</li><li>Item moved</li></History>
          <Sash />
          <Tabs role="tablist"><Tab $w={82} role="tab">Composition</Tab><Tab $w={97} $on role="tab" aria-selected="true">Item Properties</Tab><Tab $w={103} role="tab">Atlas generation</Tab></Tabs>
          <DockTitle $h={21}><i /><h2>Item Properties</h2><i /><button aria-label="Close item properties"><Cross /></button></DockTitle>
          <Heading>Legend</Heading>
          <ScrollArea>
            <Props>
              <WrapBox><label htmlFor="wrap">Wrap text on</label><input id="wrap" type="text" /></WrapBox>
              <ItemsBox>
                <legend><svg width="12" height="8"><path d="M0 0h12L6 7z" fill="#333" /></svg>Legend items</legend>
                <Row><Push $w={74} $h={22}>Update item</Push><Push $w={64} $h={22}>Update all</Push></Row>
                <TreeFrame>
                  <Tree>
                    <thead><tr><th>1</th><th>2</th></tr></thead>
                    <tbody>
                      <tr><td><Node $x={3}><Expander aria-label="Collapse Nepal" /><Stub />Nepal</Node></td><td>Group</td></tr>
                      <tr><td><Node $x={23}><Expander aria-label="Collapse nepal" /><Stub />nepal</Node></td><td /></tr>
                      {classes.map(([n, c], i) => <tr key={n}><td><Node $x={48} $h={16}><Branch $last={i === 4} /><Chip $c={c} />...</Node></td><td /></tr>)}
                    </tbody>
                  </Tree>
                </TreeFrame>
                <Row $gap={4}>
                  {itemTools.map(([label, art, small]) => <Push key={label} aria-label={label} $w={small ? 25 : 29} $h={small ? 25 : 29}><svg width={small ? 20 : 22} height={small ? 20 : 22} viewBox="0 0 24 24" fill="none">{art}</svg></Push>)}
                </Row>
                <Auto><input type="checkbox" defaultChecked />Auto Update</Auto>
              </ItemsBox>
            </Props>
            <ScrollBar>
              <button aria-label="Scroll up"><Tri /></button>
              <Thumb><i /></Thumb>
              <button aria-label="Page up"><Tri /></button>
              <button aria-label="Scroll down"><Tri down /></button>
            </ScrollBar>
          </ScrollArea>
        </Dock>
      </Main>
      <Taskbar>
        <TaskButton $w={54} aria-label="Start">
          <svg width="37" height="37" viewBox="0 0 37 37"><defs><radialGradient id="orb" cy=".9"><stop offset="0" stopColor="#35d3fa" /><stop offset=".5" stopColor="#1a6da3" /><stop offset="1" stopColor="#13375c" /></radialGradient></defs>
            <circle cx="18.500" cy="18.500" r="17.500" fill="url(#orb)" stroke="#1c3550" /><path d="M3 16A16 15 0 0 1 34 16Q18 22 3 16z" fill="#fff" opacity=".35" />
            <path d="M11 9q5-3 8 0l-2 8q-4-3-8 0z" fill="#e8622c" /><path d="M21 10q4 2 9-1l-2 9q-5 3-9 0z" fill="#8cc63e" /><path d="M8 19q5-3 8 0l-2 8q-4-3-8 0z" fill="#6db9ee" /><path d="M18 20q4 2 9-1l-2 9q-5 3-9 0z" fill="#fdcb3a" /></svg>
        </TaskButton>
        <TaskButton $w={70} aria-label="File Explorer">
          <svg width="32" height="32" viewBox="0 0 32 32"><path d="M1 29V3q0-2 2-2h5l2 2h9l2 3h8q2 0 2 2v21z" fill="#f2d883" stroke="#c9a548" /><path d="M5 2h3v2H5z" fill="#24a64b" /><path d="M13 4h4v2h-4z" fill="#d8412c" /><path d="M20 6h6v2h-6z" fill="#3a8fd3" /><path d="M1 10h30v19H1z" fill="#f8e7a5" /><path d="M5 30V20q0-3 3-3h17q3 0 3 3v10h-6v-6H11v6z" fill="#a9dcf2" stroke="#5ba3c8" /></svg>
        </TaskButton>
        <TaskButton $w={54} aria-label="Firefox">
          <svg width="31" height="31" viewBox="0 0 31 31"><circle cx="16" cy="14" r="13" fill="#1877b8" /><path d="M8 4q8-5 15 0-5 1-4 5-5 5-8 2z" fill="#4db7e8" /><path d="M26 6q5 7 3 13-3 11-14 11Q2 29 1 17 1 9 4 4q1 4 4 4 3-1 6 1-3 2-2 5l5 1q-1 4-5 4 3 3 8 1 6-4 5-10z" fill="#e8601c" /><path d="M27 8q5 12-4 18 4-9 1-16z" fill="#fbd23c" /></svg>
        </TaskButton>
        <TaskButton $w={52} $on aria-label="QGIS"><QLogo size={30} /></TaskButton>
        <Tray>
          <svg width="15" height="13"><rect x=".500" y="4.500" width="14" height="8" fill="#d7dbe0" stroke="#68727e" /><path d="M2 6.500h11M2 8.500h11M4 10.500h7" stroke="#777" strokeDasharray="1 1" /><path d="M7 4q0-3 5-2" fill="none" stroke="#777" /></svg>
          <svg width="22" height="6"><path d="M7 5.500L11 1.500 15 5.500z" fill="#fff" stroke="#4e5f74" /></svg>
          <svg width="17" height="16"><path d="M2.500 1v14" stroke="#fff" strokeWidth="2" /><path d="M4 2q4-1 5 1h4v8H9q-2-2-5-1z" fill="#dfe5ec" stroke="#4e5f74" /><circle cx="11.500" cy="11" r="4.500" fill="#d6332c" /><path d="M9.500 9l4 4M13.500 9l-4 4" stroke="#fff" strokeWidth="1.500" /></svg>
          <svg width="15" height="16"><path d="M8 2.500H2.500v11h6v-2M4 1h3" fill="#66788d" stroke="#fff" strokeWidth="1.500" /><path d="M6 6h8v2l-2 3H8L6 8z" fill="#fff" /><path d="M8.500 3v3M11.500 3v3M10 11v3" stroke="#fff" strokeWidth="1.500" /></svg>
          <svg width="17" height="16"><rect x="5" y="4" width="11" height="8" fill="#586b80" stroke="#fff" strokeWidth="1.500" /><path d="M8 14.500h7M3.500 6v8M2 1v2M5 1v2" stroke="#fff" strokeWidth="1.500" /><path d="M1 3h5v4H1z" fill="#fff" /></svg>
          <svg width="16" height="14"><path d="M1 5h3l3-4v12L4 9H1z" fill="#fff" stroke="#4e5f74" strokeWidth=".700" /><path d="M9 5q2 2 0 4M11 3q4 4 0 8M13 1q5 6 0 12" fill="none" stroke="#fff" /></svg>
          <Clock>10:37 AM<br />1/31/2014</Clock>
          <Peek aria-label="Show desktop" />
        </Tray>
      </Taskbar>
    </Window>
  );
}
